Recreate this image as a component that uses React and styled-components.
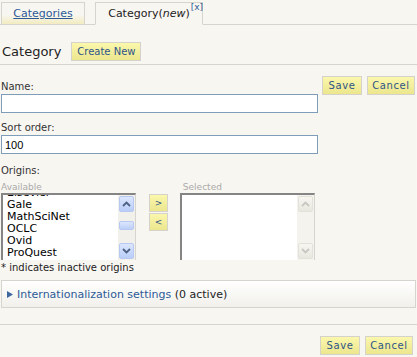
import React from 'react';
import styled, { createGlobalStyle } from 'styled-components';

const GlobalStyle = createGlobalStyle`
  html, body {
    margin: 0;
    padding: 0;
    background: #f8f6f1;
  }
  body {
    font-family: "DejaVu Sans", Verdana, sans-serif;
    font-size: 10px;
    color: #222;
  }
`;

const Page = styled.div`
  width: 417px;
  height: 357px;
  overflow: hidden;
`;

const TabBar = styled.div`
  display: flex;
  align-items: flex-end;
  height: 24px;
  padding-left: 1px;
  border-bottom: 1px solid #d6d4ce;
`;

const Tab = styled.div`
  position: relative;
  box-sizing: border-box;
  width: ${p => p.w}px;
  height: 23px;
  margin-right: ${p => p.gap || 0}px;
  margin-bottom: -1px;
  display: flex;
  align-items: center;
  justify-content: center;
  border: 1px solid #d6d4ce;
  border-bottom-color: ${p => p.active ? '#f8f6f1' : '#d6d4ce'};
  background: ${p => p.active ? '#f8f6f1' : 'linear-gradient(#f8f6f1 55%, #f3ecc0)'};
  font-size: 11px;
`;

const TabLink = styled.a`
  color: #2d5a96;
  text-decoration: underline;
  cursor: pointer;
`;

const CloseMark = styled.span`
  position: absolute;
  top: -1px;
  right: -1px;
  font-size: 9px;
  color: #2d5a96;
`;

const Header = styled.div`
  display: flex;
  align-items: center;
  gap: 10px;
  height: 19px;
  padding: 17px 2px 3px;
  border-bottom: 1px solid #d6d4ce;
`;

const Title = styled.h2`
  margin: 0;
  font-weight: normal;
  font-size: 13px;
  color: #222;
`;

const YellowButton = styled.button`
  box-sizing: border-box;
  width: ${p => p.w}px;
  height: 19px;
  padding: 0;
  border: 1px solid #d4d2ca;
  background: linear-gradient(#fbf7ac, #ece68e);
  color: #2f5587;
  font-family: "DejaVu Sans", Verdana, sans-serif;
  font-size: 10px;
  letter-spacing: ${p => p.spaced ? '0.6px' : '0'};
  text-align: center;
  cursor: pointer;
`;

const FormArea = styled.div`
  display: flex;
  padding: 11px 0 0 1px;
`;

const Fields = styled.div`
  width: 317px;
  display: flex;
  flex-direction: column;
`;

const Actions = styled.div`
  display: flex;
  gap: 5px;
  margin-left: 4px;
  align-items: flex-start;
`;

const Label = styled.label`
  display: block;
  color: #333;
  margin-top: ${p => p.top || 0}px;
  margin-bottom: 2px;
  line-height: 11px;
`;

const TextInput = styled.input`
  box-sizing: border-box;
  width: 317px;
  height: 19px;
  border: 1px solid #7f9db9;
  background: #fff;
  padding: 1px 3px;
  font-family: "Liberation Sans", Arial, sans-serif;
  font-size: 11px;
  color: #000;
  outline: none;
`;

const Origins = styled.div`
  display: flex;
  margin-top: 4px;
`;

const ListColumn = styled.div`
  display: flex;
  flex-direction: column;
`;

const SmallLabel = styled.div`
  font-size: 9px;
  color: #aaa;
  line-height: 10px;
  margin-bottom: 1px;
`;

const ListBox = styled.div`
  box-sizing: border-box;
  width: 135px;
  height: 67px;
  display: flex;
  overflow: hidden;
  border-top: 2px solid #858585;
  border-left: 2px solid #858585;
  border-right: 1px solid #d6d4ce;
  background: #fff;
`;

const Items = styled.div`
  flex: 1;
  overflow: hidden;
  padding-left: 4px;
  color: ${p => p.disabled ? '#aaa' : '#000'};
`;

const ItemsInner = styled.div`
  margin-top: -8px;
`;

const Item = styled.div`
  font-size: 11px;
  line-height: 12px;
  height: 12px;
`;

const ScrollBar = styled.div`
  width: 17px;
  display: flex;
  flex-direction: column;
  background: ${p => p.disabled ? '#f4f3ee' : '#f1f0ea'};
  padding: 1px 0;
  box-sizing: border-box;
`;

const ScrollBtn = styled.div`
  box-sizing: border-box;
  height: 16px;
  margin: 0 1px;
  border: 1px solid ${p => p.disabled ? '#e3e2da' : '#b7c9f2'};
  border-radius: 2px;
  background: ${p => p.disabled ? 'linear-gradient(#f7f6f1, #e8e7df)' : 'linear-gradient(#dce6fd, #b9cdf8)'};
  display: flex;
  align-items: center;
  justify-content: center;
`;

const Track = styled.div`
  flex: 1;
  display: flex;
  flex-direction: column;
  justify-content: flex-end;
  padding-bottom: 13px;
`;

const Thumb = styled.div`
  height: 7px;
  margin: 0 1px;
  border: 1px solid #b7c9f2;
  border-radius: 2px;
  background: linear-gradient(#dce6fd, #bccff8);
`;

const MoveButtons = styled.div`
  display: flex;
  flex-direction: column;
  gap: 1px;
  margin: 12px 12px 0 13px;
`;

const MoveBtn = styled.button`
  box-sizing: border-box;
  width: 19px;
  height: 18px;
  padding: 0;
  border: 1px solid #d4d2ca;
  background: linear-gradient(#fbf7ac, #ece68e);
  color: #2f5587;
  font-family: "DejaVu Sans", Verdana, sans-serif;
  font-size: 9px;
`;

const Note = styled.div`
  margin-top: 2px;
  margin-left: 1px;
  line-height: 11px;
  font-size: 10px;
`;

const Disclosure = styled.div`
  box-sizing: border-box;
  margin: 7px 1px 0 1px;
  height: 28px;
  border: 1px solid #d6d4ce;
  background: linear-gradient(#ffffff, #f1f0eb);
  display: flex;
  align-items: center;
  padding-left: 5px;
  gap: 4px;
  font-size: 11px;
`;

const DisclosureLink = styled.span`
  color: #2d5a96;
`;

const Divider = styled.div`
  margin-top: 16px;
  border-top: 1px solid #d6d4ce;
`;

const Footer = styled.div`
  display: flex;
  justify-content: flex-end;
  gap: 5px;
  padding: 11px 4px 0 0;
`;

const Arrow = ({ up, color }) => (
  <svg width="9" height="6" viewBox="0 0 9 6">
    <path d={up ? 'M1 5 L4.5 1.5 L8 5' : 'M1 1 L4.5 4.5 L8 1'} fill="none" stroke={color} strokeWidth="1.8" />
  </svg>
);

const Triangle = () => (
  <svg width="6" height="7" viewBox="0 0 6 7">
    <path d="M0 0 L6 3.5 L0 7 Z" fill="#3f67a0" />
  </svg>
);

const available = ['Elsevier', 'Gale', 'MathSciNet', 'OCLC', 'Ovid', 'ProQuest', 'PLoS'];

const App = () => (
  <Page>
    <GlobalStyle />
    <TabBar>
      <Tab w={84} gap={10}><TabLink>Categories</TabLink></Tab>
      <Tab w={108} active>
        <span>Category(<i>new</i>)</span>
        <CloseMark>[x]</CloseMark>
      </Tab>
    </TabBar>

    <Header>
      <Title>Category</Title>
      <YellowButton w={70}>Create New</YellowButton>
    </Header>

    <FormArea>
      <Fields>
        <Label top={5}>Name:</Label>
        <TextInput defaultValue="" />
        <Label top={9}>Sort order:</Label>
        <TextInput defaultValue="100" />
        <Label top={11}>Origins:</Label>
        <Origins>
          <ListColumn>
            <SmallLabel>Available</SmallLabel>
            <ListBox>
              <Items>
                <ItemsInner>
                  {available.map(name => <Item key={name}>{name}</Item>)}
                </ItemsInner>
              </Items>
              <ScrollBar>
                <ScrollBtn><Arrow up color="#4d6185" /></ScrollBtn>
                <Track><Thumb /></Track>
                <ScrollBtn><Arrow color="#4d6185" /></ScrollBtn>
              </ScrollBar>
            </ListBox>
          </ListColumn>
          <MoveButtons>
            <MoveBtn>&gt;</MoveBtn>
            <MoveBtn>&lt;</MoveBtn>
          </MoveButtons>
          <ListColumn>
            <SmallLabel>&nbsp;Selected</SmallLabel>
            <ListBox>
              <Items disabled />
              <ScrollBar disabled>
                <ScrollBtn disabled><Arrow up color="#c8c7c0" /></ScrollBtn>
                <Track />
                <ScrollBtn disabled><Arrow color="#c8c7c0" /></ScrollBtn>
              </ScrollBar>
            </ListBox>
          </ListColumn>
        </Origins>
      </Fields>
      <Actions>
        <YellowButton w={40} spaced>Save</YellowButton>
        <YellowButton w={48} spaced>Cancel</YellowButton>
      </Actions>
    </FormArea>

    <Note>* indicates inactive origins</Note>

    <Disclosure>
      <Triangle />
      <span><DisclosureLink>Internationalization settings</DisclosureLink> (0 active)</span>
    </Disclosure>

    <Divider />

    <Footer>
      <YellowButton w={40} spaced>Save</YellowButton>
      <YellowButton w={48} spaced>Cancel</YellowButton>
    </Footer>
  </Page>
);

export default App;
